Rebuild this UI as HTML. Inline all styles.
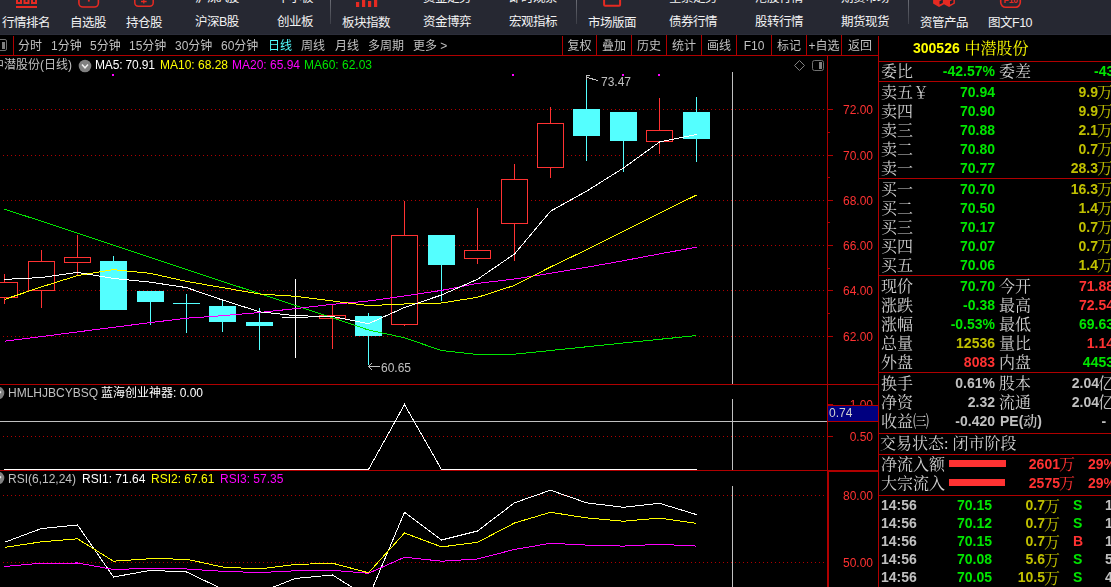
<!DOCTYPE html>
<html lang="zh-CN"><head><meta charset="utf-8"><title>中潜股份 300526</title>
<style>
html,body{margin:0;padding:0;background:#000;}
body{width:1111px;height:587px;overflow:hidden;position:relative;font-family:"Liberation Sans","Noto Sans CJK SC",sans-serif;}
#root{position:absolute;left:0;top:0;width:1111px;height:587px;overflow:hidden;background:#000;}
#gl{position:absolute;left:0;top:35px;width:1111px;height:552px;overflow:hidden;will-change:transform;}
#gl2{position:absolute;left:0;top:-35px;width:1111px;height:587px;}
.abs{position:absolute;white-space:nowrap;}
#tb{position:absolute;left:0;top:0;width:1111px;height:35px;background:#262832;overflow:hidden;box-sizing:border-box;border-bottom:1px solid #2b2d39;}
.tbt{position:absolute;white-space:nowrap;font-size:12.5px;letter-spacing:-0.5px;line-height:14px;color:#f2f2f2;font-family:"Liberation Sans","Noto Sans CJK SC",sans-serif;}
.sep{position:absolute;top:0;width:1px;height:24px;background:linear-gradient(#6a6c74,#3c3e47);}
.tab{position:absolute;white-space:nowrap;font-size:12px;line-height:14px;top:39px;color:#c0c0c0;font-family:"Liberation Sans","Noto Sans CJK SC",sans-serif;}
.ct{position:absolute;white-space:nowrap;font-size:12px;line-height:14px;font-family:"Liberation Sans","Noto Sans CJK SC",sans-serif;}
.ax{position:absolute;white-space:nowrap;font-size:12px;line-height:14px;color:#ff3232;font-family:"Liberation Sans",sans-serif;}
.hl{position:absolute;height:1px;background:#b00000;}
.vl{position:absolute;width:1px;background:#b00000;}
.lb{position:absolute;white-space:nowrap;font-size:16px;line-height:18px;color:#d0d0d0;font-family:"Liberation Serif","Noto Serif CJK SC",serif;font-weight:400;}
.nm{position:absolute;white-space:nowrap;font-size:14px;line-height:18px;font-weight:bold;font-family:"Liberation Sans","Noto Sans CJK SC",sans-serif;text-align:right;}
.nm .pe{font-family:"Liberation Serif","Noto Serif CJK SC",serif;font-weight:600;font-size:14px;}
.nm .cj{font-family:"Liberation Serif","Noto Serif CJK SC",serif;font-weight:400;font-size:16px;margin-left:-1px;position:relative;top:1px;}
</style></head>
<body><div id="root">
<div id="tb">
<div class="tbt" style="left:195px;top:-9px">沪深A股</div><div class="tbt" style="left:195px;top:15px">沪深B股</div>
<div class="tbt" style="left:277px;top:-9px">中小板</div><div class="tbt" style="left:277px;top:15px">创业板</div>
<div class="tbt" style="left:423px;top:-9px">资金走势</div><div class="tbt" style="left:423px;top:15px">资金博弈</div>
<div class="tbt" style="left:509px;top:-9px">即时观察</div><div class="tbt" style="left:509px;top:15px">宏观指标</div>
<div class="tbt" style="left:669px;top:-9px">全景走势</div><div class="tbt" style="left:669px;top:15px">债券行情</div>
<div class="tbt" style="left:755px;top:-9px">港股行情</div><div class="tbt" style="left:755px;top:15px">股转行情</div>
<div class="tbt" style="left:841px;top:-9px">期货市场</div><div class="tbt" style="left:841px;top:15px">期货现货</div>
<div class="tbt" style="left:2px;top:16px">行情排名</div>
<div class="tbt" style="left:70px;top:16px">自选股</div>
<div class="tbt" style="left:126px;top:16px">持仓股</div>
<div class="tbt" style="left:342px;top:16px">板块指数</div>
<div class="tbt" style="left:588px;top:16px">市场版面</div>
<div class="tbt" style="left:920px;top:16px">资管产品</div>
<div class="tbt" style="left:988px;top:16px">图文F10</div>
<div class="sep" style="left:330px"></div><div class="sep" style="left:576px"></div><div class="sep" style="left:908px"></div>
<svg class="abs" style="left:0;top:0" width="1111" height="35" viewBox="0 0 1111 35">
 <g fill="none" stroke="#e62a22" stroke-width="2">
  <rect x="17" y="-6" width="4" height="9"/><rect x="24.5" y="-6" width="4" height="9"/><rect x="32" y="-6" width="4" height="9"/>
 </g>
 <g fill="#e62a22">
  <rect x="16" y="6" width="21" height="2"/>
  <rect x="356" y="2" width="3.2" height="5"/><rect x="362" y="-3" width="3.2" height="10"/><rect x="368" y="1" width="3.2" height="6"/><rect x="374" y="-5" width="3.2" height="12"/>
  <path d="M933.1 -2 L933.1 3.6 L939 6.9 L944 4.2 L949.1 6.9 L954.9 3.6 L954.9 -2 Z"/>
 </g>
 <g fill="none" stroke="#e62a22">
  <rect x="78.9" y="-8" width="19.5" height="15" rx="4" stroke-width="1.6"/>
  <path d="M88.8 -3 V1.6" stroke-width="1.8"/>
  <rect x="134.8" y="-8" width="18.4" height="14.2" rx="3.5" stroke-width="1.5"/>
  <path d="M141 1.5 H146.6 M143.8 -1 V3.6" stroke-width="1.3"/>
  <rect x="604.1" y="-8" width="16" height="13.8" rx="1" stroke-width="2"/>
  <rect x="1000.7" y="-10" width="19.6" height="17.3" rx="5" stroke-width="1.6"/>
 </g>
 <path d="M939.5 1.2 L942.8 -0.4 L942.8 3 L939.5 4.6 Z M950 1.2 L953.4 -0.4 L953.4 3 L950 4.6 Z" fill="#1a2230"/>
 <text x="1010.8" y="2.6" font-family="Liberation Sans, sans-serif" font-size="9.5" font-weight="bold" fill="#e62a22" text-anchor="middle" textLength="14.5" lengthAdjust="spacingAndGlyphs">F10</text>
</svg>
</div>
<div id="gl"><div id="gl2">
<div class="tab" style="left:18px">分时</div><div class="tab" style="left:51px">1分钟</div><div class="tab" style="left:90px">5分钟</div><div class="tab" style="left:129px">15分钟</div><div class="tab" style="left:175px">30分钟</div><div class="tab" style="left:221px">60分钟</div><div class="tab" style="left:268px;color:#54ffff">日线</div><div class="tab" style="left:301px">周线</div><div class="tab" style="left:335px">月线</div><div class="tab" style="left:368px">多周期</div><div class="tab" style="left:413px">更多 &gt;</div>
<div class="vl" style="left:562px;top:36px;height:19px"></div><div class="tab" style="left:563px;width:33px;text-align:center">复权</div><div class="vl" style="left:596px;top:35px;height:20px"></div><div class="tab" style="left:597px;width:34px;text-align:center">叠加</div><div class="vl" style="left:631px;top:35px;height:20px"></div><div class="tab" style="left:632px;width:34px;text-align:center">历史</div><div class="vl" style="left:666px;top:35px;height:20px"></div><div class="tab" style="left:667px;width:34px;text-align:center">统计</div><div class="vl" style="left:701px;top:35px;height:20px"></div><div class="tab" style="left:702px;width:34px;text-align:center">画线</div><div class="vl" style="left:736px;top:35px;height:20px"></div><div class="tab" style="left:737px;width:34px;text-align:center">F10</div><div class="vl" style="left:771px;top:35px;height:20px"></div><div class="tab" style="left:772px;width:34px;text-align:center">标记</div><div class="vl" style="left:806px;top:35px;height:20px"></div><div class="tab" style="left:807px;width:34px;text-align:center">+自选</div><div class="vl" style="left:841px;top:35px;height:20px"></div><div class="tab" style="left:842px;width:36px;text-align:center">返回</div>
<div class="abs" style="left:-4px;top:39px;width:9px;height:10px;border:1px solid #707070;border-radius:2px;box-sizing:content-box"><div style="position:absolute;left:5px;top:2px;width:3px;height:7px;background:#808080"></div></div><div class="vl" style="left:13px;top:36px;height:19px"></div><div class="hl" style="left:0;top:55px;width:879px"></div>
<div class="vl" style="left:878px;top:36px;height:551px"></div><div class="vl" style="left:827px;top:56px;height:531px"></div><div class="hl" style="left:0;top:384px;width:879px"></div><div class="hl" style="left:0;top:470px;width:879px"></div><div class="vl" style="left:828px;top:470px;height:117px"></div><div class="hl" style="left:827px;top:471px;width:52px"></div>
<svg class="abs" style="left:0;top:0" width="879" height="587" viewBox="0 0 879 587" shape-rendering="crispEdges">
<line x1="3" y1="109.5" x2="826" y2="109.5" stroke="#b00000" stroke-width="1" stroke-dasharray="1 3"/>
<line x1="3" y1="155.5" x2="826" y2="155.5" stroke="#b00000" stroke-width="1" stroke-dasharray="1 3"/>
<line x1="3" y1="200.5" x2="826" y2="200.5" stroke="#b00000" stroke-width="1" stroke-dasharray="1 3"/>
<line x1="3" y1="245.5" x2="826" y2="245.5" stroke="#b00000" stroke-width="1" stroke-dasharray="1 3"/>
<line x1="3" y1="290.5" x2="826" y2="290.5" stroke="#b00000" stroke-width="1" stroke-dasharray="1 3"/>
<line x1="3" y1="336.5" x2="826" y2="336.5" stroke="#b00000" stroke-width="1" stroke-dasharray="1 3"/>
<line x1="3" y1="436.5" x2="826" y2="436.5" stroke="#b00000" stroke-width="1" stroke-dasharray="1 3"/>
<line x1="3" y1="495.5" x2="826" y2="495.5" stroke="#b00000" stroke-width="1" stroke-dasharray="1 3"/>
<line x1="3" y1="562.5" x2="826" y2="562.5" stroke="#b00000" stroke-width="1" stroke-dasharray="1 3"/>
<line x1="828" y1="109.5" x2="833" y2="109.5" stroke="#b00000"/>
<line x1="828" y1="155.5" x2="833" y2="155.5" stroke="#b00000"/>
<line x1="828" y1="200.5" x2="833" y2="200.5" stroke="#b00000"/>
<line x1="828" y1="245.5" x2="833" y2="245.5" stroke="#b00000"/>
<line x1="828" y1="290.5" x2="833" y2="290.5" stroke="#b00000"/>
<line x1="828" y1="336.5" x2="833" y2="336.5" stroke="#b00000"/>
<line x1="828" y1="132.5" x2="830" y2="132.5" stroke="#b00000"/>
<line x1="828" y1="177.5" x2="830" y2="177.5" stroke="#b00000"/>
<line x1="828" y1="222.5" x2="830" y2="222.5" stroke="#b00000"/>
<line x1="828" y1="268.5" x2="830" y2="268.5" stroke="#b00000"/>
<line x1="828" y1="313.5" x2="830" y2="313.5" stroke="#b00000"/>
<line x1="828" y1="436.5" x2="833" y2="436.5" stroke="#b00000"/>
<line x1="828" y1="404.5" x2="833" y2="404.5" stroke="#b00000"/>
<line x1="4.5" y1="274" x2="4.5" y2="282" stroke="#ff3232"/>
<line x1="4.5" y1="297" x2="4.5" y2="304" stroke="#ff3232"/>
<rect x="-8.5" y="282.5" width="26" height="15" fill="#000" stroke="#ff3232"/>
<line x1="41.5" y1="250" x2="41.5" y2="261" stroke="#ff3232"/>
<line x1="41.5" y1="290" x2="41.5" y2="308" stroke="#ff3232"/>
<rect x="28.5" y="261.5" width="26" height="29" fill="#000" stroke="#ff3232"/>
<line x1="77.5" y1="235" x2="77.5" y2="257" stroke="#ff3232"/>
<line x1="77.5" y1="262" x2="77.5" y2="276" stroke="#ff3232"/>
<rect x="64.5" y="257.5" width="26" height="5" fill="#000" stroke="#ff3232"/>
<line x1="113.5" y1="256" x2="113.5" y2="310" stroke="#54ffff"/>
<rect x="100" y="261" width="27" height="49" fill="#54ffff"/>
<line x1="150.5" y1="291" x2="150.5" y2="325" stroke="#54ffff"/>
<rect x="137" y="291" width="27" height="11" fill="#54ffff"/>
<line x1="186.5" y1="294" x2="186.5" y2="333" stroke="#54ffff"/>
<line x1="173" y1="303.5" x2="200" y2="303.5" stroke="#54ffff"/>
<line x1="222.5" y1="301" x2="222.5" y2="332" stroke="#54ffff"/>
<rect x="209" y="306" width="27" height="16" fill="#54ffff"/>
<line x1="259.5" y1="308" x2="259.5" y2="350" stroke="#54ffff"/>
<rect x="246" y="322" width="27" height="4" fill="#54ffff"/>
<line x1="295.5" y1="279" x2="295.5" y2="358" stroke="#ffffff"/>
<line x1="282" y1="317.5" x2="308" y2="317.5" stroke="#ffffff"/>
<line x1="332.5" y1="305" x2="332.5" y2="315" stroke="#ff3232"/>
<line x1="332.5" y1="318" x2="332.5" y2="349" stroke="#ff3232"/>
<rect x="319.5" y="315.5" width="26" height="3" fill="#000" stroke="#ff3232"/>
<line x1="368.5" y1="313" x2="368.5" y2="365" stroke="#54ffff"/>
<rect x="355" y="316" width="27" height="20" fill="#54ffff"/>
<line x1="404.5" y1="201" x2="404.5" y2="235" stroke="#ff3232"/>
<line x1="404.5" y1="324" x2="404.5" y2="326" stroke="#ff3232"/>
<rect x="391.5" y="235.5" width="26" height="89" fill="#000" stroke="#ff3232"/>
<line x1="441.5" y1="235" x2="441.5" y2="301" stroke="#54ffff"/>
<rect x="428" y="235" width="27" height="30" fill="#54ffff"/>
<line x1="477.5" y1="208" x2="477.5" y2="250" stroke="#ff3232"/>
<line x1="477.5" y1="258" x2="477.5" y2="264" stroke="#ff3232"/>
<rect x="464.5" y="250.5" width="26" height="8" fill="#000" stroke="#ff3232"/>
<line x1="514.5" y1="164" x2="514.5" y2="179" stroke="#ff3232"/>
<line x1="514.5" y1="223" x2="514.5" y2="261" stroke="#ff3232"/>
<rect x="501.5" y="179.5" width="26" height="44" fill="#000" stroke="#ff3232"/>
<line x1="550.5" y1="107" x2="550.5" y2="123" stroke="#ff3232"/>
<line x1="550.5" y1="167" x2="550.5" y2="178" stroke="#ff3232"/>
<rect x="537.5" y="123.5" width="26" height="44" fill="#000" stroke="#ff3232"/>
<line x1="586.5" y1="79" x2="586.5" y2="161" stroke="#54ffff"/>
<rect x="573" y="109" width="27" height="27" fill="#54ffff"/>
<line x1="623.5" y1="112" x2="623.5" y2="172" stroke="#54ffff"/>
<rect x="610" y="112" width="27" height="29" fill="#54ffff"/>
<line x1="659.5" y1="98" x2="659.5" y2="130" stroke="#ff3232"/>
<line x1="659.5" y1="141" x2="659.5" y2="154" stroke="#ff3232"/>
<rect x="646.5" y="130.5" width="26" height="11" fill="#000" stroke="#ff3232"/>
<line x1="696.5" y1="97" x2="696.5" y2="162" stroke="#54ffff"/>
<rect x="683" y="112" width="27" height="27" fill="#54ffff"/>
<polyline points="4.5,209.2 41.5,221.2 77.5,233.3 113.5,245.3 150.5,257.4 186.5,269.4 222.5,281.5 259.5,293.5 295.5,305.6 332.5,317.8 368.5,330.0 404.5,337.8 441.5,350.5 477.5,354.5 514.5,354.2 550.5,350.5 586.5,346.8 623.5,343.0 659.5,339.3 696.5,335.6" fill="none" stroke="#00e600" stroke-width="1"/>
<polyline points="4.5,341.2 41.5,336.6 77.5,331.9 113.5,327.3 150.5,322.6 186.5,318.2 222.5,315.7 259.5,312.5 295.5,308.6 332.5,304.3 368.5,301.0 404.5,296.0 441.5,290.4 477.5,283.4 514.5,279.0 550.5,273.3 586.5,267.3 623.5,260.7 659.5,253.9 696.5,247.2" fill="none" stroke="#ff00ff" stroke-width="1"/>
<polyline points="4.5,299.4 41.5,286.9 77.5,275.6 113.5,269.6 150.5,273.4 186.5,281.4 222.5,287.6 259.5,294.0 295.5,296.3 332.5,301.0 368.5,305.6 404.5,304.0 441.5,303.0 477.5,297.3 514.5,285.4 550.5,267.0 586.5,249.8 623.5,231.4 659.5,213.3 696.5,195.0" fill="none" stroke="#ffff00" stroke-width="1"/>
<polyline points="4.5,279.4 41.5,277.5 77.5,272.4 113.5,278.4 150.5,282.2 186.5,287.6 222.5,300.0 259.5,311.8 295.5,315.7 332.5,316.6 368.5,323.7 404.5,307.5 441.5,295.0 477.5,279.3 514.5,254.0 550.5,211.2 586.5,191.2 623.5,168.0 659.5,142.0 696.5,134.4" fill="none" stroke="#ffffff" stroke-width="1"/>
<line x1="732.5" y1="72" x2="732.5" y2="384" stroke="#c0c0c0"/>
<line x1="732.5" y1="399" x2="732.5" y2="470" stroke="#c0c0c0"/>
<line x1="732.5" y1="486" x2="732.5" y2="587" stroke="#c0c0c0"/>
<rect x="112" y="74" width="2" height="2" fill="#ff00ff"/>
<rect x="512" y="74" width="2" height="2" fill="#ff00ff"/>
<rect x="622" y="74" width="2" height="2" fill="#ff00ff"/>
<rect x="658" y="74" width="2" height="2" fill="#ff00ff"/>
<path d="M586.5 75 V80 M586 75.5 H590 M587 77.5 L598 80.5" fill="none" stroke="#c0c0c0"/>
<path d="M368 366.5 H380 M368.5 366.5 l3.5 -3.5 M368.5 366.5 l3.5 3.5" fill="none" stroke="#c0c0c0"/>
<line x1="0" y1="421.5" x2="827" y2="421.5" stroke="#c0c0c0"/>
<polyline points="4,469.5 368.5,469.5 404.5,404.5 441.5,469.5 697,469.5" fill="none" stroke="#ffffff"/>
<polyline points="4.5,542.3 41.5,528.5 77.5,525.0 113.5,577.0 150.5,570.3 186.5,572.0 222.5,589.1 259.5,592.5 295.5,578.4 332.5,575.0 368.5,597.6 404.5,512.3 441.5,540.0 477.5,531.0 514.5,502.8 550.5,490.2 586.5,502.8 623.5,507.3 659.5,503.3 696.5,514.6" fill="none" stroke="#ffffff" stroke-width="1"/>
<polyline points="4.5,547.4 41.5,541.8 77.5,538.8 113.5,561.2 150.5,558.7 186.5,559.2 222.5,567.0 259.5,569.0 295.5,564.5 332.5,563.2 368.5,572.8 404.5,533.0 441.5,546.9 477.5,542.3 514.5,523.0 550.5,512.3 586.5,517.9 623.5,521.2 659.5,518.1 696.5,523.4" fill="none" stroke="#ffff00" stroke-width="1"/>
<polyline points="4.5,566.5 41.5,563.2 77.5,563.0 113.5,569.5 150.5,568.3 186.5,569.0 222.5,571.3 259.5,572.6 295.5,570.8 332.5,570.3 368.5,573.3 404.5,557.2 441.5,561.2 477.5,559.0 514.5,549.4 550.5,543.3 586.5,545.1 623.5,546.1 659.5,544.3 696.5,546.1" fill="none" stroke="#ff00ff" stroke-width="1"/>
</svg>
<svg class="abs" style="left:790px;top:58px" width="38" height="16" viewBox="790 58 38 16"><path d="M799.5 60.5 L804.5 65.5 L799.5 70.5 L794.5 65.5 Z" fill="none" stroke="#808080"/><rect x="812.5" y="60.5" width="11" height="10" rx="2" fill="none" stroke="#707070"/><rect x="819" y="62" width="3" height="7" fill="#808080"/></svg>
<div class="ct" style="left:-8px;top:58px;color:#c0c0c0;">中潜股份(日线)</div><div class="ct" style="left:95px;top:58px;color:#ffffff;letter-spacing:-0.15px">MA5: 70.91</div><div class="ct" style="left:160px;top:58px;color:#ffff00;">MA10: 68.28</div><div class="ct" style="left:232px;top:58px;color:#ff00ff;">MA20: 65.94</div><div class="ct" style="left:304px;top:58px;color:#00e600;">MA60: 62.03</div><div class="ct" style="left:601px;top:75px;color:#c0c0c0;">73.47</div><div class="ct" style="left:381px;top:361px;color:#c0c0c0;">60.65</div><div class="ct" style="left:8px;top:386px;color:#c0c0c0;">HMLHJBCYBSQ</div><div class="ct" style="left:101px;top:386px;color:#ffffff;">蓝海创业神器: 0.00</div><div class="ct" style="left:8px;top:472px;color:#c0c0c0;">RSI(6,12,24)</div><div class="ct" style="left:82px;top:472px;color:#ffffff;">RSI1: 71.64</div><div class="ct" style="left:151px;top:472px;color:#ffff00;">RSI2: 67.61</div><div class="ct" style="left:220px;top:472px;color:#ff00ff;">RSI3: 57.35</div>
<svg class="abs" style="left:78.0px;top:58.5px" width="14" height="14" viewBox="-1 -1 14 14"><circle cx="6" cy="6" r="6.3" fill="#808080"/><path d="M3 4.6 L6 7.8 L9 4.6" fill="none" stroke="#f0f0f0" stroke-width="1.5"/></svg><svg class="abs" style="left:-9.0px;top:386.0px" width="14" height="14" viewBox="-1 -1 14 14"><circle cx="6" cy="6" r="6.3" fill="#808080"/><path d="M3 4.6 L6 7.8 L9 4.6" fill="none" stroke="#f0f0f0" stroke-width="1.5"/></svg><svg class="abs" style="left:-9.0px;top:471.0px" width="14" height="14" viewBox="-1 -1 14 14"><circle cx="6" cy="6" r="6.3" fill="#808080"/><path d="M3 4.6 L6 7.8 L9 4.6" fill="none" stroke="#f0f0f0" stroke-width="1.5"/></svg>
<div class="ax" style="left:842px;top:103px;width:31px;text-align:right">72.00</div><div class="ax" style="left:842px;top:149px;width:31px;text-align:right">70.00</div><div class="ax" style="left:842px;top:194px;width:31px;text-align:right">68.00</div><div class="ax" style="left:842px;top:239px;width:31px;text-align:right">66.00</div><div class="ax" style="left:842px;top:284px;width:31px;text-align:right">64.00</div><div class="ax" style="left:842px;top:330px;width:31px;text-align:right">62.00</div><div class="ax" style="left:842px;top:398px;width:31px;text-align:right">1.00</div><div class="ax" style="left:842px;top:430px;width:31px;text-align:right">0.50</div><div class="ax" style="left:842px;top:489px;width:31px;text-align:right">80.00</div><div class="ax" style="left:842px;top:556px;width:31px;text-align:right">50.00</div><div class="abs" style="left:828px;top:405px;width:50px;height:17px;background:#000080;border-top:1px solid #b00000;border-bottom:1px solid #b00000;box-sizing:border-box"></div><div class="ct" style="left:829px;top:406px;color:#d0d0d0">0.74</div>
<div class="abs" style="left:879px;top:36px;width:232px;height:551px;overflow:hidden" id="rp">
<div class="hl" style="left:0;top:25px;width:232px"></div><div class="hl" style="left:0;top:45px;width:232px"></div><div class="hl" style="left:0;top:142px;width:232px"></div><div class="hl" style="left:0;top:239px;width:232px"></div><div class="hl" style="left:0;top:336px;width:232px"></div><div class="hl" style="left:0;top:397px;width:232px"></div><div class="hl" style="left:0;top:418px;width:232px"></div><div class="hl" style="left:0;top:459px;width:232px"></div>
<div class="nm" style="left:34px;top:3px;color:#ffff00">300526 <span class="cj" style="margin-left:1px">中潜股份</span></div>
<div class="lb" style="left:2px;top:27px">委比</div><div class="nm" style="right:116px;top:26px;color:#00e600">-42.57%</div><div class="lb" style="left:120px;top:27px">委差</div><div class="nm" style="left:215px;top:26px;color:#00e600">-4353</div>
<div class="lb" style="left:2px;top:48px">卖五</div><div class="nm" style="right:116px;top:47px;color:#00e600">70.94</div><div class="nm" style="right:-2px;top:47px;color:#c0c000">9.9<span class="cj">万</span></div><div class="lb" style="left:2px;top:67px">卖四</div><div class="nm" style="right:116px;top:66px;color:#00e600">70.90</div><div class="nm" style="right:-2px;top:66px;color:#c0c000">9.9<span class="cj">万</span></div><div class="lb" style="left:2px;top:86px">卖三</div><div class="nm" style="right:116px;top:85px;color:#00e600">70.88</div><div class="nm" style="right:-2px;top:85px;color:#c0c000">2.1<span class="cj">万</span></div><div class="lb" style="left:2px;top:105px">卖二</div><div class="nm" style="right:116px;top:104px;color:#00e600">70.80</div><div class="nm" style="right:-2px;top:104px;color:#c0c000">0.7<span class="cj">万</span></div><div class="lb" style="left:2px;top:124px">卖一</div><div class="nm" style="right:116px;top:123px;color:#00e600">70.77</div><div class="nm" style="right:-2px;top:123px;color:#c0c000">28.3<span class="cj">万</span></div><div class="lb" style="left:34px;top:48px">￥</div>
<div class="lb" style="left:2px;top:145px">买一</div><div class="nm" style="right:116px;top:144px;color:#00e600">70.70</div><div class="nm" style="right:-2px;top:144px;color:#c0c000">16.3<span class="cj">万</span></div><div class="lb" style="left:2px;top:164px">买二</div><div class="nm" style="right:116px;top:163px;color:#00e600">70.50</div><div class="nm" style="right:-2px;top:163px;color:#c0c000">1.4<span class="cj">万</span></div><div class="lb" style="left:2px;top:183px">买三</div><div class="nm" style="right:116px;top:182px;color:#00e600">70.17</div><div class="nm" style="right:-2px;top:182px;color:#c0c000">0.7<span class="cj">万</span></div><div class="lb" style="left:2px;top:202px">买四</div><div class="nm" style="right:116px;top:201px;color:#00e600">70.07</div><div class="nm" style="right:-2px;top:201px;color:#c0c000">0.7<span class="cj">万</span></div><div class="lb" style="left:2px;top:221px">买五</div><div class="nm" style="right:116px;top:220px;color:#00e600">70.06</div><div class="nm" style="right:-2px;top:220px;color:#c0c000">1.4<span class="cj">万</span></div>
<div class="lb" style="left:2px;top:242px">现价</div><div class="nm" style="right:116px;top:241px;color:#00e600">70.70</div><div class="lb" style="left:120px;top:242px">今开</div><div class="nm" style="right:-3px;top:241px;color:#ff3232">71.88</div><div class="lb" style="left:2px;top:261px">涨跌</div><div class="nm" style="right:116px;top:260px;color:#00e600">-0.38</div><div class="lb" style="left:120px;top:261px">最高</div><div class="nm" style="right:-3px;top:260px;color:#ff3232">72.54</div><div class="lb" style="left:2px;top:280px">涨幅</div><div class="nm" style="right:116px;top:279px;color:#00e600">-0.53%</div><div class="lb" style="left:120px;top:280px">最低</div><div class="nm" style="right:-3px;top:279px;color:#00e600">69.63</div><div class="lb" style="left:2px;top:299px">总量</div><div class="nm" style="right:116px;top:298px;color:#c0c000">12536</div><div class="lb" style="left:120px;top:299px">量比</div><div class="nm" style="right:-3px;top:298px;color:#ff3232">1.14</div><div class="lb" style="left:2px;top:318px">外盘</div><div class="nm" style="right:116px;top:317px;color:#ff3232">8083</div><div class="lb" style="left:120px;top:318px">内盘</div><div class="nm" style="right:-3px;top:317px;color:#00e600">4453</div>
<div class="lb" style="left:2px;top:339px">换手</div><div class="nm" style="right:116px;top:338px;color:#c0c0c0">0.61%</div><div class="lb" style="left:120px;top:339px">股本</div><div class="nm" style="right:-3px;top:338px;color:#c0c0c0">2.04<span class="cj">亿</span></div><div class="lb" style="left:2px;top:358px">净资</div><div class="nm" style="right:116px;top:357px;color:#c0c0c0">2.32</div><div class="lb" style="left:120px;top:358px">流通</div><div class="nm" style="right:-3px;top:357px;color:#c0c0c0">2.04<span class="cj">亿</span></div><div class="lb" style="left:2px;top:377px">收益㈢</div><div class="nm" style="right:116px;top:376px;color:#c0c0c0">-0.420</div><div class="nm" style="left:121px;top:376px;color:#c0c0c0">PE(<span class="pe">动</span>)</div><div class="nm" style="right:-3px;top:376px;color:#c0c0c0">-&nbsp;&nbsp;</div>
<div class="lb" style="left:1px;top:399px">交易状态: 闭市阶段</div><div class="lb" style="left:2px;top:420px">净流入额</div><div class="lb" style="left:2px;top:439px">大宗流入</div><div class="abs" style="left:70px;top:424px;width:57px;height:7px;background:#ff3232"></div><div class="abs" style="left:70px;top:443px;width:56px;height:7px;background:#ff3232"></div><div class="nm" style="right:36px;top:419px;color:#ff3232">2601<span class="cj">万</span></div><div class="nm" style="left:209px;top:419px;color:#ff3232">29%</div><div class="nm" style="right:36px;top:438px;color:#ff3232">2575<span class="cj">万</span></div><div class="nm" style="left:209px;top:438px;color:#ff3232">29%</div>
<div class="nm" style="left:2px;top:460px;color:#c0c0c0">14:56</div><div class="nm" style="right:119px;top:460px;color:#00e600">70.15</div><div class="nm" style="right:51px;top:460px;color:#c0c000">0.7<span class="cj" style="top:2px">万</span></div><div class="nm" style="left:194px;top:460px;color:#00e600">S</div><div class="nm" style="left:226px;top:460px;color:#c0c0c0">12</div><div class="nm" style="left:2px;top:478px;color:#c0c0c0">14:56</div><div class="nm" style="right:119px;top:478px;color:#00e600">70.12</div><div class="nm" style="right:51px;top:478px;color:#c0c000">0.7<span class="cj" style="top:2px">万</span></div><div class="nm" style="left:194px;top:478px;color:#00e600">S</div><div class="nm" style="left:226px;top:478px;color:#c0c0c0">12</div><div class="nm" style="left:2px;top:496px;color:#c0c0c0">14:56</div><div class="nm" style="right:119px;top:496px;color:#00e600">70.15</div><div class="nm" style="right:51px;top:496px;color:#c0c000">0.7<span class="cj" style="top:2px">万</span></div><div class="nm" style="left:194px;top:496px;color:#ff3232">B</div><div class="nm" style="left:226px;top:496px;color:#c0c0c0">12</div><div class="nm" style="left:2px;top:514px;color:#c0c0c0">14:56</div><div class="nm" style="right:119px;top:514px;color:#00e600">70.08</div><div class="nm" style="right:51px;top:514px;color:#c0c000">5.6<span class="cj" style="top:2px">万</span></div><div class="nm" style="left:194px;top:514px;color:#00e600">S</div><div class="nm" style="left:226px;top:514px;color:#c0c0c0">52</div><div class="nm" style="left:2px;top:532px;color:#c0c0c0">14:56</div><div class="nm" style="right:119px;top:532px;color:#00e600">70.05</div><div class="nm" style="right:51px;top:532px;color:#c0c000">10.5<span class="cj" style="top:2px">万</span></div><div class="nm" style="left:194px;top:532px;color:#00e600">S</div><div class="nm" style="left:226px;top:532px;color:#c0c0c0">42</div>
</div>
</div></div>
</div></body></html>
